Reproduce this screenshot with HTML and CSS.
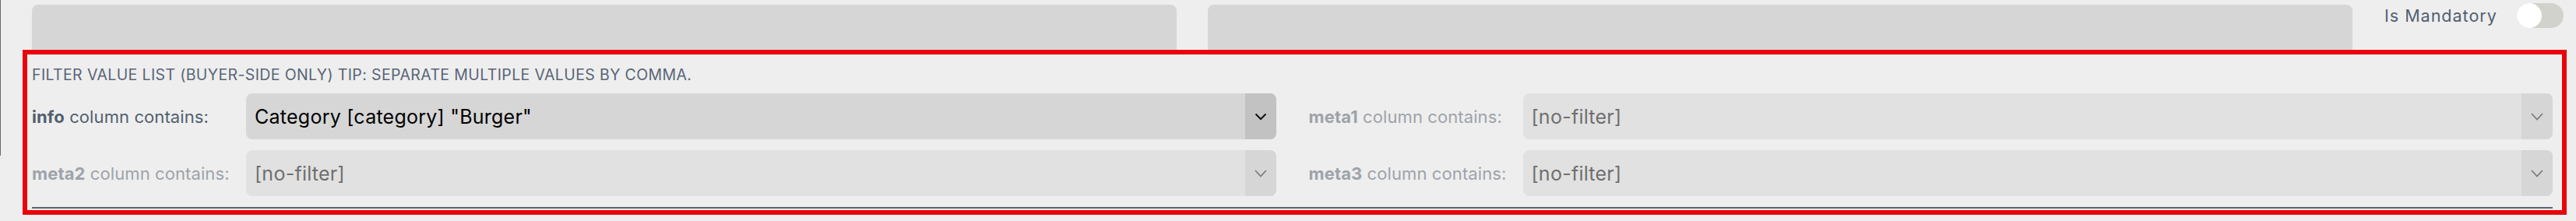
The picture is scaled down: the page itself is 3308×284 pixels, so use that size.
FILE: index.html
```html
<!DOCTYPE html>
<html lang="en">
<head>
<meta charset="utf-8">
<title>Filter value list</title>
<link rel="stylesheet" href="styles.css">
</head>
<body>
<div class="page">
  <div class="edge"></div>
  <div class="top">
    <div class="field"></div>
    <div class="field"></div>
    <div class="mandatory">
      <span class="mandatory-label">Is Mandatory</span>
      <span class="toggle"><span class="knob"></span></span>
    </div>
  </div>
  <section class="filters">
    <div class="heading">FILTER VALUE LIST (BUYER-SIDE ONLY) TIP: SEPARATE MULTIPLE VALUES BY COMMA.</div>
    <div class="grid">
      <div class="cell">
        <label class="label"><b>info</b> column contains:</label>
        <div class="select">
          <span class="value">Category [category] "Burger"</span>
          <span class="arrow"><svg width="16" height="10" viewBox="0 0 16 10"><path d="M1.5 1.5 L8 8 L14.5 1.5" fill="none" stroke="#111" stroke-width="2"/></svg></span>
        </div>
      </div>
      <div class="cell disabled">
        <label class="label"><b>meta1</b> column contains:</label>
        <div class="select">
          <span class="value">[no-filter]</span>
          <span class="arrow"><svg width="16" height="10" viewBox="0 0 16 10"><path d="M1 1 L8 8.5 L15 1" fill="none" stroke="#777" stroke-width="1.6"/></svg></span>
        </div>
      </div>
      <div class="cell disabled">
        <label class="label"><b>meta2</b> column contains:</label>
        <div class="select">
          <span class="value">[no-filter]</span>
          <span class="arrow"><svg width="16" height="10" viewBox="0 0 16 10"><path d="M1 1 L8 8.5 L15 1" fill="none" stroke="#777" stroke-width="1.6"/></svg></span>
        </div>
      </div>
      <div class="cell disabled">
        <label class="label"><b>meta3</b> column contains:</label>
        <div class="select">
          <span class="value">[no-filter]</span>
          <span class="arrow"><svg width="16" height="10" viewBox="0 0 16 10"><path d="M1 1 L8 8.5 L15 1" fill="none" stroke="#777" stroke-width="1.6"/></svg></span>
        </div>
      </div>
    </div>
  </section>
  <div class="highlight"></div>
</div>
</body>
</html>
```

FILE: styles.css
```css
html, body {
  margin: 0;
  padding: 0;
  background: #eeeeee;
}
body {
  font-family: Inter, "Noto Sans", "Liberation Sans", sans-serif;
  width: 3308px;
  height: 284px;
  overflow: hidden;
}
.page {
  position: relative;
  height: 284px;
}
.edge {
  position: absolute;
  left: 0;
  top: 0;
  width: 1px;
  height: 200px;
  background: #6a6a6a;
}
.top {
  display: flex;
  align-items: flex-start;
  padding: 6px 0 0 41px;
  height: 64px;
  box-sizing: content-box;
}
.field {
  width: 1470px;
  height: 64px;
  background: #d6d6d6;
  border-radius: 8px 8px 0 0;
  margin-right: 40px;
  flex: none;
}
.mandatory {
  display: flex;
  align-items: center;
  gap: 25px;
  margin-left: 1px;
  margin-top: -2px;
}
.mandatory-label {
  font-size: 21.5px;
  color: #525f70;
  letter-spacing: 1px;
}
.toggle {
  display: block;
  width: 60px;
  height: 32px;
  border-radius: 16px;
  background: #d2d2cd;
  position: relative;
}
.knob {
  position: absolute;
  left: 0;
  top: 0;
  width: 32px;
  height: 32px;
  border-radius: 50%;
  background: #ffffff;
}
.filters {
  margin-left: 41px;
  width: 3237px;
  padding-top: 14px;
  padding-bottom: 14px;
  border-bottom: 2px solid #5b6472;
}
.heading {
  font-size: 19.5px;
  line-height: 24px;
  height: 24px;
  color: #596577;
  margin-bottom: 12px;
  letter-spacing: 0.38px;
  white-space: nowrap;
}
.grid {
  display: grid;
  grid-template-columns: 1fr 1fr;
  column-gap: 42px;
  row-gap: 14px;
}
.cell {
  display: flex;
  align-items: center;
}
.label {
  width: 275px;
  flex: none;
  font-size: 22px;
  letter-spacing: 0.1px;
  color: #525f70;
  white-space: nowrap;
}
.label b {
  font-weight: 700;
}
.select {
  flex: 1;
  height: 59px;
  display: flex;
  align-items: stretch;
  background: #d6d6d6;
  border-radius: 8px;
  overflow: hidden;
}
.value {
  flex: 1;
  display: flex;
  align-items: center;
  padding-left: 11px;
  font-size: 25px;
  letter-spacing: 0.25px;
  color: #000000;
  white-space: nowrap;
}
.arrow {
  width: 40px;
  flex: none;
  display: flex;
  align-items: center;
  justify-content: center;
  background: #c2c2c2;
}
.disabled .label {
  color: #9ea3aa;
}
.disabled .select {
  background: #e1e1e1;
}
.disabled .value {
  color: #6f6f6f;
}
.disabled .arrow {
  background: #d6d6d6;
}
.highlight {
  position: absolute;
  left: 29px;
  top: 64px;
  width: 3267px;
  height: 212px;
  box-sizing: border-box;
  border: 6px solid #e8040a;
  pointer-events: none;
}
```
